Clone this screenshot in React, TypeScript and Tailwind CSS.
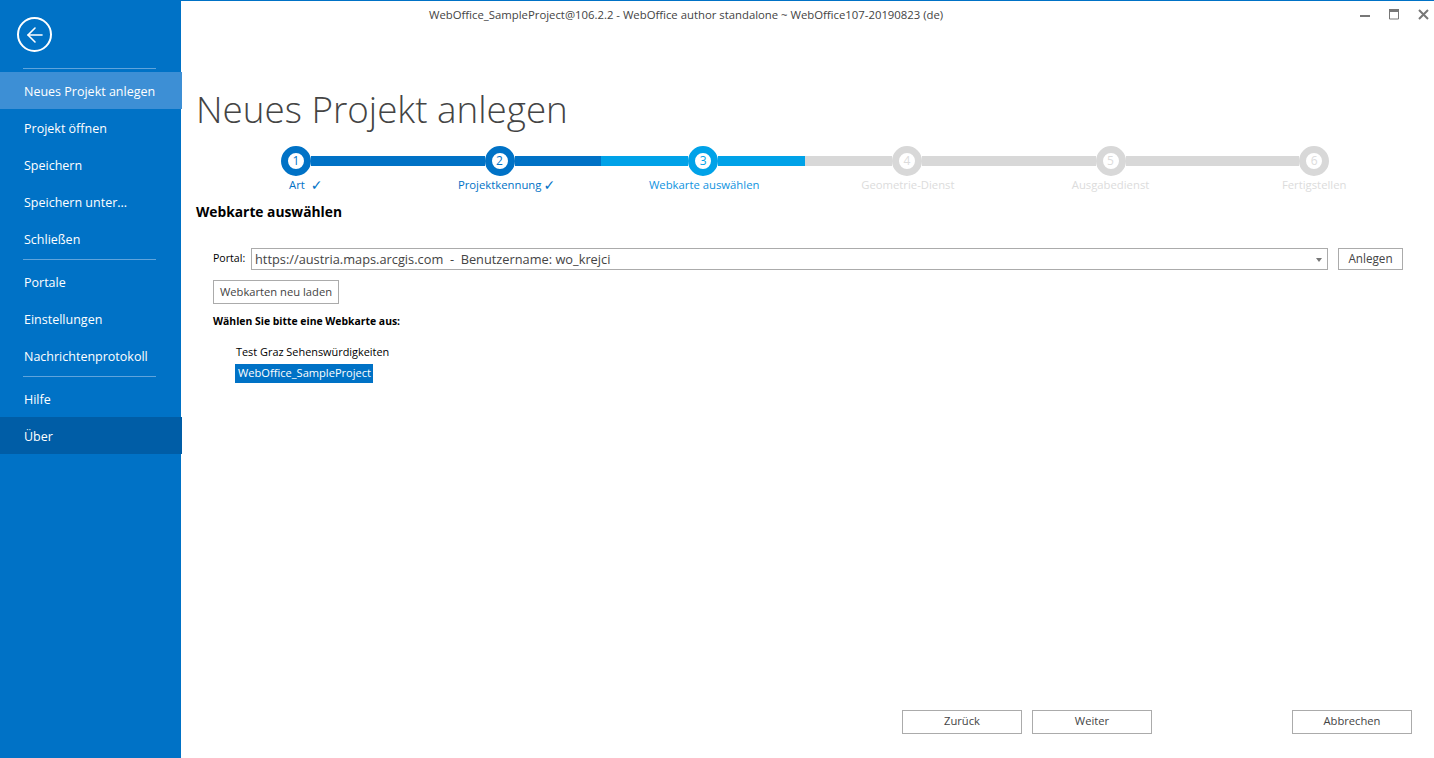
import { ArrowLeft } from "lucide-react";

const font = { fontFamily: '"Open Sans", "Noto Sans", sans-serif' };

const menuGroups = [
  ["Neues Projekt anlegen", "Projekt öffnen", "Speichern", "Speichern unter...", "Schließen"],
  ["Portale", "Einstellungen", "Nachrichtenprotokoll"],
  ["Hilfe", "Über"],
];

const Sidebar = () => (
  <aside className="w-[181px] shrink-0 bg-[#0072c6] text-white flex flex-col">
    <div className="h-[68px] pl-[17px] pt-[17px] shrink-0">
      <div className="w-[35px] h-[35px] rounded-full border-2 border-white flex items-center justify-center">
        <ArrowLeft className="w-[24px] h-[24px]" strokeWidth={1.6} />
      </div>
    </div>
    {menuGroups.map((group, i) => (
      <div key={i}>
        <div className={`h-px bg-[#5fa4dc] ml-[23px] w-[133px] ${i === 0 ? "mb-[3px]" : "mt-[2px] mb-[3px]"}`} />
        {group.map((item) => (
          <div
            key={item}
            className={`h-[37px] w-[182px] pl-6 pt-[3px] flex items-center text-[12.5px] ${
              item === "Neues Projekt anlegen" ? "bg-[#3d8fd5]" : item === "Über" ? "bg-[#005da6]" : ""
            }`}
          >
            {item}
          </div>
        ))}
      </div>
    ))}
  </aside>
);

type StepState = "done" | "current" | "todo";

const steps: { n: number; label: string; state: StepState; check?: string; shift?: string }[] = [
  { n: 1, label: "Art", state: "done", check: "ml-[6px]", shift: "ml-[20px]" },
  { n: 2, label: "Projektkennung", state: "done", check: "ml-[2px]", shift: "ml-[14px]" },
  { n: 3, label: "Webkarte auswählen", state: "current", shift: "ml-[2px]" },
  { n: 4, label: "Geometrie-Dienst", state: "todo", shift: "ml-[2px]" },
  { n: 5, label: "Ausgabedienst", state: "todo" },
  { n: 6, label: "Fertigstellen", state: "todo" },
];

const barColor = { done: "bg-[#0072c6]", current: "bg-[#00a2e8]", todo: "bg-[#d8d8d8]" };
const ringColor = { done: "border-[#0072c6]", current: "border-[#00a2e8]", todo: "border-[#d8d8d8]" };
const numColor = { done: "text-[#0072c6]", current: "text-[#00a2e8]", todo: "text-[#dcdcdc]" };
const labelColor = { done: "text-[#0072c6]", current: "text-[#0f93e0]", todo: "text-[#dcdcdc]" };

const Stepper = () => (
  <div className="flex ml-[13px] w-[1222px]">
    {steps.map((s, i) => (
      <div key={s.n} className="flex-1 flex flex-col items-center">
        <div className="w-full flex items-center">
          <div className={`flex-1 h-2.5 ${i === 0 ? "" : barColor[s.state]}`} />
          <div
            className={`w-[30px] h-[30px] rounded-full border-[7px] bg-white flex items-center justify-center text-[12px] leading-none ${ringColor[s.state]} ${numColor[s.state]}`}
          >
            {s.n}
          </div>
          <div className={`flex-1 h-2.5 ${i === 5 ? "" : barColor[s.state]}`} />
        </div>
        <div className={`h-4 mt-px flex items-center text-[11.3px] whitespace-nowrap ${s.shift ?? ""} ${labelColor[s.state]}`}>
          {s.label}
          {s.check && (
            <span className={`text-[14px] leading-none ${s.check}`} style={{ fontFamily: '"DejaVu Sans", sans-serif' }}>
              ✓
            </span>
          )}
        </div>
      </div>
    ))}
  </div>
);

const Btn = ({ label, className }: { label: string; className: string }) => (
  <button className={`h-6 border border-[#ababab] bg-white text-[#444] text-[11.2px] flex items-center justify-center whitespace-nowrap ${className}`}>
    {label}
  </button>
);

export default function App() {
  return (
    <div className="w-[1434px] h-[758px] bg-white flex overflow-hidden" style={font}>
      <Sidebar />
      <main className="flex-1 min-w-0 flex flex-col border-t border-[#0072c6]">
        <div className="flex h-[28px] shrink-0">
          <div className="w-[800px] pl-[248px] pt-[6px] text-[11.34px] leading-4 text-[#444] whitespace-nowrap">
            WebOffice_SampleProject@106.2.2 - WebOffice author standalone ~ WebOffice107-20190823 (de)
          </div>
          <div className="ml-auto flex gap-[19px] pr-[5px] pt-[7px] h-fit text-[#777]">
            <svg width="10" height="10" viewBox="0 0 10 10" className="mt-px"><rect x="0" y="6" width="10" height="2" fill="currentColor" /></svg>
            <svg width="10" height="11" viewBox="0 0 10 11" className="mt-px"><path d="M.5.5h9v9.5h-9z" fill="none" stroke="currentColor" /><rect width="10" height="3" fill="currentColor" /></svg>
            <svg width="11" height="11" viewBox="0 0 11 11" className="mt-px"><path d="M1 1l9 9M10 1l-9 9" stroke="currentColor" strokeWidth="2" /></svg>
          </div>
        </div>
        <h1 className="ml-[15px] mt-[55px] h-[62px] text-[36.8px] font-light leading-[50px] text-[#444] whitespace-nowrap">
          Neues Projekt anlegen
        </h1>
        <Stepper />
        <h2 className="ml-[15px] mt-[9px] text-[13.8px] leading-5 font-bold text-black">Webkarte auswählen</h2>
        <div className="ml-8 mt-[26px] flex items-center">
          <span className="w-[38px] text-[10.6px] text-black">Portal:</span>
          <div className="w-[1077px] h-[22px] border border-[#ababab] pl-[3px] pr-[5px] pt-[2px] flex items-center justify-between text-[12.8px] text-[#444]">
            <span className="whitespace-pre">https://austria.maps.arcgis.com  -  Benutzername: wo_krejci</span>
            <span className="w-0 h-0 border-x-[3.5px] border-x-transparent border-t-4 border-t-[#777]" />
          </div>
          <Btn label="Anlegen" className="ml-[10px] w-[65px] !h-[22px] !text-[11.7px]" />
        </div>
        <Btn label="Webkarten neu laden" className="ml-8 mt-[10px] w-[126px]" />
        <div className="ml-8 mt-[9px] text-[10.4px] leading-4 font-bold text-black">Wählen Sie bitte eine Webkarte aus:</div>
        <div className="ml-[54px] mt-[12px] flex flex-col items-start">
          <div className="h-[23px] pl-px flex items-center text-[10.9px] text-black">Test Graz Sehenswürdigkeiten</div>
          <div className="h-[19px] w-[138px] pl-[3px] flex items-center bg-[#0072c6] text-[11.1px] text-white whitespace-nowrap">WebOffice_SampleProject</div>
        </div>
        <div className="mt-auto mb-6 flex pr-[22px]">
          <Btn label="Zurück" className="ml-[721px] w-[120px] pb-[2px]" />
          <Btn label="Weiter" className="ml-[10px] w-[120px] pb-[2px]" />
          <Btn label="Abbrechen" className="ml-auto w-[120px] pb-[2px]" />
        </div>
      </main>
    </div>
  );
}
